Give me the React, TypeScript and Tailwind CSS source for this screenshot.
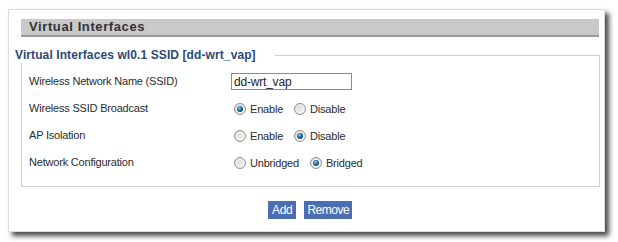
import React from 'react';

/** Radio button drawn in the Windows 7 style of the screenshot */
function Radio({ checked }: { checked: boolean }) {
  return (
    <svg width="12" height="12" viewBox="0 0 12 12" className="shrink-0">
      <defs>
        <linearGradient id="rbg" x1="0" y1="0" x2="1" y2="1">
          <stop offset="0" stopColor="#d2d2d2" />
          <stop offset="1" stopColor="#fcfcfc" />
        </linearGradient>
        <radialGradient id="rdot" cx="0.4" cy="0.35" r="0.7">
          <stop offset="0" stopColor="#9fd3f2" />
          <stop offset="0.45" stopColor="#2a7ab3" />
          <stop offset="1" stopColor="#0d3a5c" />
        </radialGradient>
      </defs>
      <circle cx="6" cy="6" r="5.5" fill="url(#rbg)" stroke="#8e8f8f" strokeWidth="1" />
      <circle cx="6" cy="6" r="4" fill="none" stroke="#f4f4f4" strokeWidth="0.8" />
      {checked && <circle cx="6" cy="6" r="3" fill="url(#rdot)" />}
    </svg>
  );
}

interface Choice {
  label: string;
  checked: boolean;
}

function RadioGroup({ choices }: { choices: Choice[] }) {
  return (
    <div className="flex items-center gap-[11px]">
      {choices.map((c) => (
        <span key={c.label} className="flex items-center gap-[4px]">
          <Radio checked={c.checked} />
          <span className="pt-[2px]">{c.label}</span>
        </span>
      ))}
    </div>
  );
}

function Row({ label, children }: { label: string; children: React.ReactNode }) {
  return (
    <div className="flex items-center h-[27px]">
      <div className="w-[202px] shrink-0">{label}</div>
      <div className="flex items-center">{children}</div>
    </div>
  );
}

export default function App() {
  return (
    <div
      className="w-[618px] h-[242px] bg-white pt-[9px] pl-[8px] text-[11px] tracking-[-0.2px] text-[#2b2b2b]"
      style={{ fontFamily: '"Liberation Sans", Arial, sans-serif' }}
    >
      <div className="w-[597px] h-[223px] border border-[#dcdcdc] bg-white shadow-[4px_4px_5px_#4a4a4a] pt-[9px] pl-[12px] pr-[5px] flex flex-col">
        {/* Titre de section */}
        <div className="h-[18px] bg-[#c9c9c9] border-b-2 border-[#9a9a9a] pl-[8px] flex items-center text-[13px] font-bold text-[#333] tracking-[0.6px]">
          Virtual Interfaces
        </div>

        {/* Bloc wl0.1 */}
        <fieldset className="mt-[10px] border border-[#cfcfcf] pl-[7px] pb-[10px] mr-[-1px]">
          <legend className="-ml-[14px] pr-[19px] text-[12px] leading-[16px] font-bold text-[#2c4a78] tracking-[0.1px]">
            Virtual Interfaces wl0.1 SSID [dd-wrt_vap]
          </legend>
          <div className="pt-[5px]">
            <Row label="Wireless Network Name (SSID)">
              <input
                defaultValue="dd-wrt_vap"
                className="w-[121px] h-[17px] border border-[#8a8a8a] px-[2px] text-[12px] text-[#222] outline-none tracking-[-0.2px]"
                style={{ fontFamily: '"Liberation Sans", Arial, sans-serif' }}
              />
            </Row>
            <Row label="Wireless SSID Broadcast">
              <div className="pl-[3px]">
                <RadioGroup
                  choices={[
                    { label: 'Enable', checked: true },
                    { label: 'Disable', checked: false },
                  ]}
                />
              </div>
            </Row>
            <Row label="AP Isolation">
              <div className="pl-[3px]">
                <RadioGroup
                  choices={[
                    { label: 'Enable', checked: false },
                    { label: 'Disable', checked: true },
                  ]}
                />
              </div>
            </Row>
            <Row label="Network Configuration">
              <div className="pl-[3px]">
                <RadioGroup
                  choices={[
                    { label: 'Unbridged', checked: false },
                    { label: 'Bridged', checked: true },
                  ]}
                />
              </div>
            </Row>
          </div>
        </fieldset>

        {/* Boutons */}
        <div className="mt-[14px] flex justify-center gap-[8px]">
          <button className="h-[18px] px-[4px] bg-[#4b6db3] text-white text-[12px] leading-[18px] tracking-[-0.3px]">
            Add
          </button>
          <button className="h-[18px] px-[3px] bg-[#4b6db3] text-white text-[12px] leading-[18px] tracking-[-0.5px]">
            Remove
          </button>
        </div>
      </div>
    </div>
  );
}
